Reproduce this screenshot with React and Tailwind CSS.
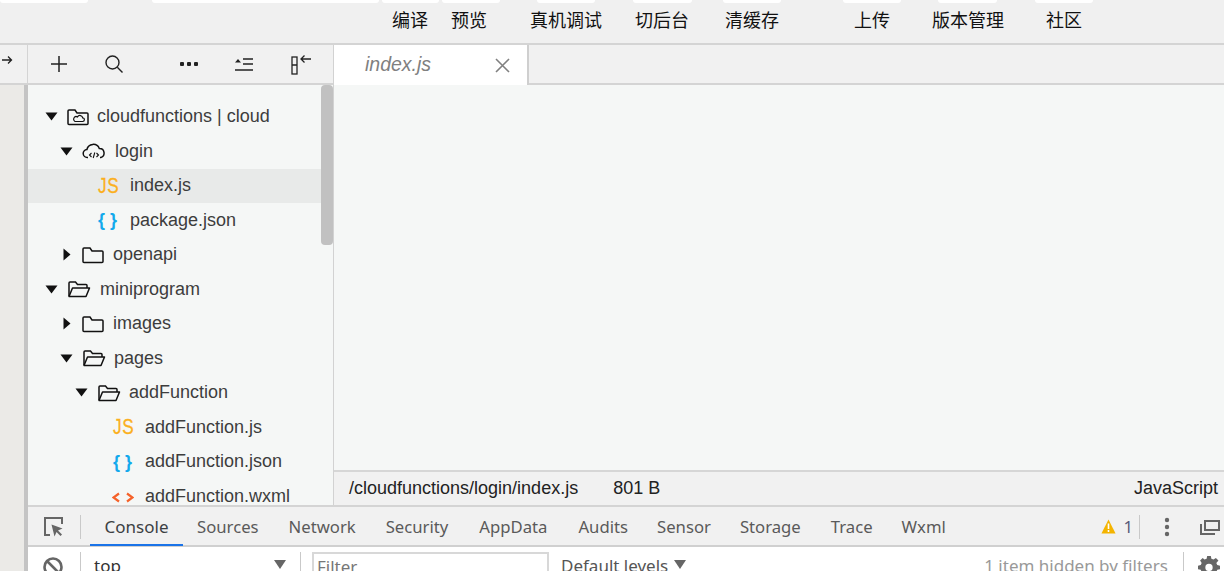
const caps = [
  "w-[88px] mr-[64px]", "w-[227px] mr-[3px]", "w-[57px] mr-[3px]", "w-[58px] mr-[37px]", "w-[58px] mr-[38px]",
  "w-[59px] mr-[31px]", "w-[58px] mr-[62px]", "w-[58px] mr-[37px]", "w-[59px] mr-[38px]", "w-[58px]",
];
const labels = [
  ["编译", "ml-[392px]"], ["预览", "ml-[23px]"], ["真机调试", "ml-[43px]"], ["切后台", "ml-[33px]"], ["清缓存", "ml-[36px]"],
  ["上传", "ml-[75px]"], ["版本管理", "ml-[42px]"], ["社区", "ml-[42px]"],
];

function Caret({ open }) {
  return open ? (
    <svg width="13" height="9" viewBox="0 0 13 9" className="shrink-0"><path d="M0.5 0.5h12L6.5 8.5z" fill="#111" /></svg>
  ) : (
    <svg width="8" height="13" viewBox="0 0 8 13" className="shrink-0 mx-[2.5px]"><path d="M0.5 0.5v12L7.5 6.5z" fill="#111" /></svg>
  );
}
function FolderClosed() {
  return (
    <svg width="22" height="18" viewBox="0 0 22 18" fill="none" stroke="#111" strokeWidth="1.5" className="shrink-0">
      <path d="M1 15.5V3a1 1 0 0 1 1-1h6l2 3h10a1 1 0 0 1 1 1v9.5a1 1 0 0 1-1 1H2a1 1 0 0 1-1-1z" />
    </svg>
  );
}
function FolderOpen() {
  return (
    <svg width="24" height="18" viewBox="0 0 24 18" fill="none" stroke="#111" strokeWidth="1.5" className="shrink-0">
      <path d="M2 16V3a1 1 0 0 1 1-1h5.5l2 2.5H19a1 1 0 0 1 1 1V8" />
      <path d="M2 16.5L5.5 8h17L19 16.5z" strokeLinejoin="round" />
    </svg>
  );
}
function FolderCloud() {
  return (
    <svg width="22" height="18" viewBox="0 0 22 18" fill="none" stroke="#111" strokeWidth="1.5" className="shrink-0">
      <path d="M1 15.5V3a1 1 0 0 1 1-1h6l2 3h10a1 1 0 0 1 1 1v9.5a1 1 0 0 1-1 1H2a1 1 0 0 1-1-1z" />
      <path d="M8 13.5h7.5a1.8 1.8 0 0 0 .2-3.6 2.8 2.8 0 0 0-5.2-1A2.3 2.3 0 0 0 8 13.5z" strokeWidth="1.2" />
    </svg>
  );
}
function CloudCode() {
  return (
    <svg width="24" height="17" viewBox="0 0 24 17" fill="none" stroke="#111" strokeWidth="1.5" className="shrink-0">
      <path d="M6 14.5H5.5a4 4 0 0 1-.6-8 6.5 6.5 0 0 1 12.4-1 4.6 4.6 0 0 1 1.5 9H18" />
      <path d="M9.5 10l-2 2 2 2M14.5 10l2 2-2 2M12.8 9.5l-1.6 5.5" strokeWidth="1.1" />
    </svg>
  );
}
function Js() {
  return (
    <span className="w-[20px] shrink-0 origin-left scale-x-[0.78] text-[#fbb01f] text-[22px] leading-none tracking-[1px] [-webkit-text-stroke:0.3px_#fbb01f]">JS</span>
  );
}
function Json() {
  return (
    <span className="w-[20px] pr-[1px] shrink-0 flex justify-between text-[#12a9ec] text-[18px] leading-none font-bold">
      <span>{"{"}</span>
      <span>{"}"}</span>
    </span>
  );
}
function Wxml() {
  return (
    <svg width="22" height="11" viewBox="0 0 22 11" fill="none" stroke="#f5622a" strokeWidth="2.2" className="shrink-0 -ml-[1px] mr-[-1px] mt-[2px]">
      <path d="M7 1.5L1.5 5.5 7 9.5M15 1.5l5.5 4-5.5 4" />
    </svg>
  );
}

const tree = [
  { pl: "pl-[17px]", caret: true, icon: <FolderCloud />, gap: "gap-[8.5px]", text: "cloudfunctions | cloud" },
  { pl: "pl-[32px]", caret: true, icon: <CloudCode />, gap: "gap-[9px]", text: "login" },
  { pl: "pl-[70px]", icon: <Js />, gap: "gap-[12px]", text: "index.js", active: true },
  { pl: "pl-[70px]", icon: <Json />, gap: "gap-[12px]", text: "package.json" },
  { pl: "pl-[32px]", caret: false, icon: <FolderClosed />, gap: "gap-[9px]", text: "openapi" },
  { pl: "pl-[17px]", caret: true, icon: <FolderOpen />, gap: "gap-[9px]", text: "miniprogram" },
  { pl: "pl-[32px]", caret: false, icon: <FolderClosed />, gap: "gap-[9px]", text: "images" },
  { pl: "pl-[32px]", caret: true, icon: <FolderOpen />, gap: "gap-[8.5px]", text: "pages" },
  { pl: "pl-[47px]", caret: true, icon: <FolderOpen />, gap: "gap-[8.5px]", text: "addFunction" },
  { pl: "pl-[85px]", icon: <Js />, gap: "gap-[12px]", text: "addFunction.js" },
  { pl: "pl-[85px]", icon: <Json />, gap: "gap-[12px]", text: "addFunction.json" },
  { pl: "pl-[85px]", icon: <Wxml />, gap: "gap-[12px]", text: "addFunction.wxml" },
];

const tabs = [
  ["Sources", "ml-[14px]"], ["Network", "ml-[30px]"], ["Security", "ml-[30px]"], ["AppData", "ml-[31px]"],
  ["Audits", "ml-[31px]"], ["Sensor", "ml-[29px]"], ["Storage", "ml-[29px]"], ["Trace", "ml-[30px]"], ["Wxml", "ml-[29px]"],
];

export default function App() {
  return (
    <div className="w-[1224px] h-[571px] overflow-hidden flex flex-col bg-[#f1f1f1] font-['Liberation_Sans',sans-serif]">
      {/* top toolbar */}
      <div className="h-[45px] shrink-0 flex flex-col bg-[#f0f0f0] border-b-2 border-[#d4d4d4]">
        <div className="h-[3px] flex">
          {caps.map((c, i) => <div key={i} className={`${c} h-[3px] bg-white rounded-b-[4px]`} />)}
        </div>
        <div className="flex h-[36px] items-center text-[18px] text-[#111] font-['Liberation_Sans','Noto_Sans_CJK_SC',sans-serif]">
          {labels.map(([t, m]) => <span key={t} className={`${m} whitespace-nowrap leading-none`}>{t}</span>)}
        </div>
      </div>

      <div className="flex-1 min-h-0 flex">
        {/* left strip */}
        <div className="w-[28px] shrink-0 flex flex-col">
          <div className="h-[40px] shrink-0 flex items-start pt-[9px] pl-[1px] bg-[#f1f1f1] border-r border-[#d4d4d4] border-b-2 border-b-[#d4d4d4]">
            <svg width="12" height="12" viewBox="0 0 12 12" fill="none" stroke="#222" strokeWidth="1.3"><path d="M1 6h9.5M7 2.5L10.5 6 7 9.5" /></svg>
          </div>
          <div className="flex-1 bg-[#ebeae7] border-r-[4px] border-[#c4c4c4]" />
        </div>

        <div className="flex-1 min-w-0 flex flex-col">
          <div className="h-[460px] shrink-0 flex">
            {/* explorer */}
            <div className="w-[306px] shrink-0 flex flex-col border-r border-[#d2d2d2]">
              <div className="h-[40px] shrink-0 flex items-center bg-[#f1f1f1] border-b-2 border-[#d4d4d4]">
                <svg width="18" height="18" viewBox="0 0 18 18" fill="none" stroke="#222" strokeWidth="1.5" className="ml-[22px]"><path d="M9 1v16M1 9h16" /></svg>
                <svg width="20" height="20" viewBox="0 0 20 20" fill="none" stroke="#222" strokeWidth="1.4" className="ml-[36px]"><circle cx="8.5" cy="8.5" r="6.5" /><path d="M13.3 13.3L18.5 18.5" /></svg>
                <svg width="20" height="6" viewBox="0 0 20 6" fill="#222" className="ml-[55px]"><rect x="1" y="1" width="4" height="4" rx="1" /><rect x="8" y="1" width="4" height="4" rx="1" /><rect x="15" y="1" width="4" height="4" rx="1" /></svg>
                <svg width="20" height="15" viewBox="0 0 20 15" fill="none" stroke="#222" strokeWidth="1.3" className="ml-[35px]"><path d="M1 5.5L4 2l3 3.5z" fill="#222" stroke="none" /><path d="M9 2h10M9 7h10M1 13h18" /></svg>
                <svg width="21" height="21" viewBox="0 0 21 21" fill="none" stroke="#222" strokeWidth="1.3" className="ml-[37px]"><rect x="1" y="3" width="5" height="17" /><path d="M1 11h5M20 5H10M13.5 1.5L10 5l3.5 3.5" /></svg>
              </div>
              <div className="relative flex-1 min-h-0 overflow-hidden bg-[#f5f7f6] pt-[14.5px] text-[18px] text-[#3d3d3d]">
                {tree.map((r) => (
                  <div key={r.text} className={`h-[34.5px] flex items-center ${r.pl} ${r.gap} ${r.active ? "bg-[#e8eae9]" : ""} whitespace-nowrap`}>
                    {r.caret !== undefined && <Caret open={r.caret} />}
                    {r.icon}
                    <span>{r.text}</span>
                  </div>
                ))}
                <div className="absolute top-0 right-0 w-[12px] h-[160px] bg-[#c1c1c1] rounded-[4px]" />
              </div>
            </div>

            {/* editor */}
            <div className="flex-1 min-w-0 flex flex-col">
              <div className="h-[40px] shrink-0 flex bg-[#f1f1f1] border-b-2 border-[#d4d4d4]">
                <div className="w-[195px] h-[40px] shrink-0 flex items-center bg-white border-r-2 border-[#cfcfcf] pl-[31px] pr-[17px] justify-between">
                  <span className="italic text-[19.5px] text-[#808080]">index.js</span>
                  <svg width="15" height="15" viewBox="0 0 15 15" stroke="#808080" strokeWidth="1.6"><path d="M1 1l13 13M14 1L1 14" /></svg>
                </div>
              </div>
              <div className="flex-1 bg-[#f5f7f6]" />
              <div className="h-[35px] shrink-0 flex items-center justify-between pl-[15px] pr-[6px] bg-[#f1f1f1] border-t-2 border-[#d6d6d6] text-[18px] text-[#222]">
                <div className="flex gap-[35px]">
                  <span>/cloudfunctions/login/index.js</span>
                  <span>801 B</span>
                </div>
                <span>JavaScript</span>
              </div>
            </div>
          </div>

          {/* devtools */}
          <div className="flex-1 min-h-0 flex flex-col border-t-2 border-[#d4d4d4] font-['Noto_Sans',sans-serif]">
            <div className="h-[40px] shrink-0 flex items-center bg-[#f1f1f1] border-b-2 border-[#d0d0d0] text-[#5a5a5a] text-[16.7px] pt-[1px]">
              <svg width="21" height="21" viewBox="0 0 21 21" fill="none" className="ml-[15px] shrink-0">
                <path d="M7 19H2V2h17v6" stroke="#666" strokeWidth="2" />
                <path d="M8.5 8.5l11 4-4.5 2 4 4-1.5 1.5-4-4-2 4.5z" fill="#666" />
              </svg>
              <div className="w-px h-[24px] bg-[#c9c9c9] ml-[16px]" />
              <div className="relative ml-[9px] w-[93px] h-full flex items-center justify-center text-[17px] text-[#3c4043]">
                Console
                <div className="absolute left-0 right-0 bottom-[-1px] h-[2px] bg-[#1a73e8]" />
              </div>
              {tabs.map(([t, m]) => <span key={t} className={`${m} whitespace-nowrap`}>{t}</span>)}
              <div className="flex-1" />
              <svg width="15" height="15" viewBox="0 0 17 15" preserveAspectRatio="none" className="shrink-0"><path d="M8.5 0.5L16.5 14.5H0.5z" fill="#f4b400" /><path d="M7.6 4.5h1.8v5.5H7.6zM7.6 11h1.8v2H7.6z" fill="#fff" /></svg>
              <span className="ml-[7px] text-[#5a5a7a]">1</span>
              <div className="w-px h-[24px] bg-[#c9c9c9] ml-[6px]" />
              <svg width="6" height="20" viewBox="0 0 6 20" fill="#666" className="ml-[24px]"><circle cx="3" cy="3" r="2.2" /><circle cx="3" cy="10" r="2.2" /><circle cx="3" cy="17" r="2.2" /></svg>
              <svg width="20" height="16" viewBox="0 0 20 16" className="ml-[30px] mr-[4px]" fill="none" stroke="#666" strokeWidth="2"><path d="M5 2h14v9H5z" /><path d="M1 5v10h14" /></svg>
            </div>
            <div className="flex-1 flex items-start bg-white text-[#555] text-[17px] pt-[5px]">
              <svg width="20" height="20" viewBox="0 0 20 20" fill="none" stroke="#666" strokeWidth="2.6" className="ml-[15px] mt-[5px] shrink-0"><circle cx="10" cy="10" r="8.5" /><path d="M4 4l12 12" /></svg>
              <div className="w-px h-[24px] bg-[#c9c9c9] ml-[17px]" />
              <span className="ml-[13px] w-[180px] pt-[1px] text-[#333]">top</span>
              <svg width="12" height="9" viewBox="0 0 12 9" fill="#666" className="mt-[8px] shrink-0"><path d="M0 0h12L6 9z" /></svg>
              <div className="w-px h-[24px] bg-[#c9c9c9] ml-[14px]" />
              <div className="ml-[11px] w-[237px] h-[30px] border-2 border-[#d8d8d8] pl-[3px] text-[#777]">Filter</div>
              <span className="ml-[12px] pt-[1px] whitespace-nowrap">Default levels</span>
              <svg width="12" height="9" viewBox="0 0 12 9" fill="#666" className="ml-[6px] mt-[8px] shrink-0"><path d="M0 0h12L6 9z" /></svg>
              <span className="ml-[298px] pt-[1px] whitespace-nowrap text-[#999]">1 item hidden by filters</span>
              <div className="w-px h-[24px] bg-[#c9c9c9] ml-[15px]" />
              <svg width="22" height="22" viewBox="0 0 24 24" fill="#666" className="ml-[14px] mt-[3px] shrink-0"><path fillRule="evenodd" d="M10 1h4l.6 3 2.3 1 2.6-1.7 2.8 2.8L20 8.7l1 2.3 3 .6v4l-3 .6-1 2.3 1.7 2.6-2.8 2.8-2.6-1.7-2.3 1-.6 3h-4l-.6-3-2.3-1-2.6 1.7-2.8-2.8L4 18.5 3 16.2l-3-.6v-4l3-.6 1-2.3-1.7-2.6 2.8-2.8L7.1 5l2.3-1zM12 9.5a4 4 0 1 0 0 8 4 4 0 0 0 0-8z" /></svg>
            </div>
          </div>
        </div>
      </div>
    </div>
  );
}
